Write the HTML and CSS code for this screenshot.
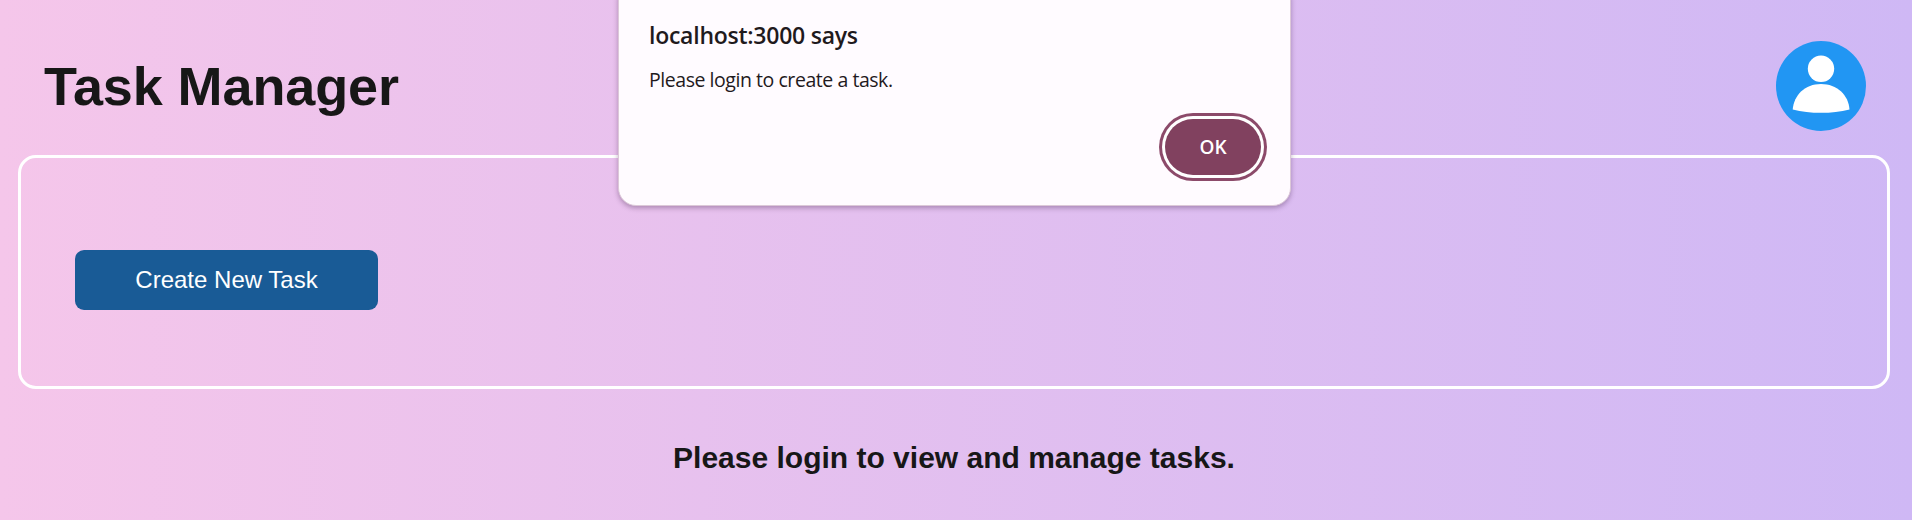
FILE: index.html
```
<!DOCTYPE html>
<html lang="en">
<head>
<meta charset="utf-8">
<title>Task Manager</title>
<link rel="stylesheet" href="styles.css">
</head>
<body>
<header class="header">
  <h1 class="title">Task Manager</h1>
  <svg class="avatar" viewBox="0 0 90 90" role="img" aria-label="Profile">
    <circle cx="45" cy="45" r="45" fill="#2196f3"/>
    <circle cx="45" cy="27.800" r="13.2" fill="#fff"/>
    <path d="M16.700 68.400C18 54 29 43 45 43s27.500 11 28.500 25.400Q60 71.800 45 71.800T16.700 68.400Z" fill="#fff"/>
  </svg>
</header>
<main>
  <section class="panel">
    <button class="create">Create New Task</button>
  </section>
  <h2 class="notice">Please login to view and manage tasks.</h2>
</main>
<div class="dialog" role="alertdialog">
  <div class="dialog-title">localhost:3000 says</div>
  <div class="dialog-message">Please login to create a task.</div>
  <button class="ok">OK</button>
</div>
</body>
</html>
```
FILE: styles.css
```
* { box-sizing: border-box; }
body {
  margin: 0;
  height: 520px;
  overflow: hidden;
  padding: 18px 22px 0 18px;
  font-family: "Liberation Sans", Arial, sans-serif;
  color: #171717;
  background: linear-gradient(90deg, #f5c6ea, #cfb8f5);
}
.header {
  display: flex;
  justify-content: space-between;
  align-items: center;
  height: 137px;
  padding: 0 24px 2px 26px;
}
.title { margin: 0; font-size: 54px; line-height: 64px; letter-spacing: -.1px; }
.avatar { width: 90px; height: 90px; }
.panel {
  display: flex;
  align-items: center;
  height: 234px;
  padding: 0 54px;
  border: 3px solid #fff;
  border-radius: 18px;
}
.create {
  width: 303px;
  height: 60px;
  margin-top: 15px;
  border: 0;
  border-radius: 9px;
  background: #195b96;
  color: #fff;
  font: 24px "Liberation Sans", Arial, sans-serif;
}
.notice {
  margin: 51px 0 0;
  text-align: center;
  font-size: 30px;
  line-height: 36px;
}
.dialog {
  position: absolute;
  top: -20px;
  left: 618px;
  display: flex;
  flex-direction: column;
  width: 673px;
  height: 226px;
  padding: 38px 29px 30px 30px;
  border: 1px solid #dcc8d8;
  border-radius: 18px;
  background: #fffbff;
  color: #1f1a1d;
  box-shadow: 0 2px 5px rgba(60, 30, 70, .35);
  font-family: "Open Sans", "Noto Sans", sans-serif;
}
.dialog-title { font-size: 23px; font-weight: 600; line-height: 32px; letter-spacing: -.25px; }
.dialog-message { margin-top: 15px; font-size: 19.5px; line-height: 28px; letter-spacing: -.45px; }
.ok {
  align-self: flex-end;
  width: 96px;
  height: 57px;
  margin-top: 25px;
  border: 0;
  border-radius: 29px;
  background: #81415f;
  box-shadow: 0 0 0 3px #fff, 0 0 0 6px #8c4a6a;
  color: #fff;
  font: 600 19px "Open Sans", "Noto Sans", sans-serif;
}
```
